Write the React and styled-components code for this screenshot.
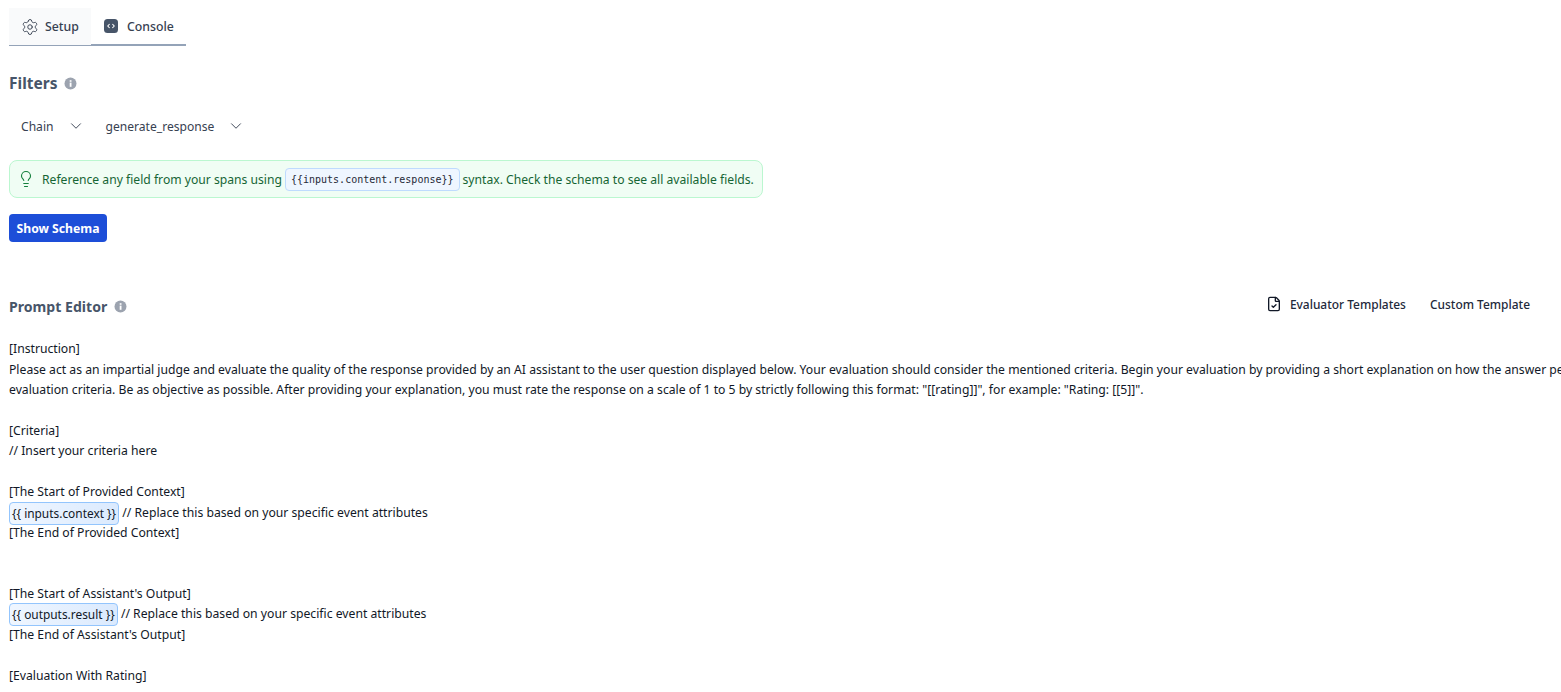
import React from "react";
import styled, { createGlobalStyle } from "styled-components";
import { Settings, ChevronDown, Lightbulb, FileCheck } from "lucide-react";

const GlobalStyle = createGlobalStyle`
  html, body {
    margin: 0;
    padding: 0;
    background: #fff;
    overflow: hidden;
  }
  body {
    font-family: "Noto Sans", "Liberation Sans", sans-serif;
  }
`;

const Page = styled.div`
  width: 1561px;
  height: 692px;
  overflow: hidden;
  padding: 8px 0 0 9px;
  box-sizing: border-box;
`;

const Tabs = styled.div`
  display: flex;
`;

const Tab = styled.div`
  display: flex;
  align-items: center;
  gap: ${(p) => (p.$active ? 6 : 8)}px;
  height: 38px;
  padding: 0 12px;
  box-sizing: border-box;
  font-size: 12.3px;
  font-weight: 500;
  color: #374151;
  background: ${(p) => (p.$active ? "#f9fafb" : "#fff")};
  border-bottom: ${(p) => (p.$active ? "1px solid #94a3b8" : "2px solid #94a3b8")};
`;

const ConsoleIcon = () => (
  <svg width="16" height="16" viewBox="0 0 16 16">
    <rect x="1" y="1" width="14" height="14" rx="3.5" fill="#475569" />
    <path d="M6.6 6 4.8 8l1.8 2M9.4 6l1.8 2-1.8 2" fill="none" stroke="#fff" strokeWidth="1.1" />
  </svg>
);

const InfoIcon = () => (
  <svg width="13" height="13" viewBox="0 0 13 13">
    <circle cx="6.5" cy="6.5" r="6" fill="#9ca3af" />
    <rect x="5.7" y="5.6" width="1.8" height="4.2" fill="#fff" />
    <rect x="5.7" y="3.2" width="1.8" height="1.6" fill="#fff" />
  </svg>
);

const HeadingRow = styled.div`
  display: flex;
  align-items: center;
  gap: 7px;
  margin-top: ${(p) => p.$top}px;
`;

const Heading = styled.h2`
  margin: 0;
  font-size: ${(p) => p.$size}px;
  line-height: 24px;
  font-weight: 700;
  color: #475569;
`;

const FilterRow = styled.div`
  display: flex;
  align-items: center;
  margin-top: 21px;
  padding-left: 1px;
  height: 20px;
`;

const Select = styled.div`
  display: flex;
  align-items: center;
  gap: 13px;
  padding: 0 10px 0 11px;
  font-size: 12.1px;
  color: #374151;
`;

const Notice = styled.div`
  display: flex;
  align-items: center;
  width: 754px;
  height: 38px;
  margin-top: 24px;
  padding: 0 7px;
  box-sizing: border-box;
  background: #f0fdf4;
  border: 1px solid #bbf7d0;
  border-radius: 8px;
  font-size: 12.15px;
  color: #166534;
  white-space: nowrap;
`;

const NoticeIcon = styled(Lightbulb)`
  flex-shrink: 0;
  margin-right: 7px;
  color: #15803d;
`;

const Code = styled.code`
  display: inline-block;
  margin: 0 3px;
  padding: 0 5px;
  height: 23px;
  line-height: 22px;
  box-sizing: border-box;
  background: #eff6ff;
  border: 1px solid #bfdbfe;
  border-radius: 4px;
  font-family: "DejaVu Sans Mono", "Liberation Mono", monospace;
  font-size: 10px;
  color: #1f2937;
`;

const PrimaryButton = styled.button`
  display: block;
  margin-top: 16px;
  width: 98px;
  height: 28px;
  padding: 0;
  border: 0;
  border-radius: 4px;
  background: #1d4ed8;
  color: #fff;
  font-family: inherit;
  font-size: 12.2px;
  font-weight: 700;
`;

const EditorHeader = styled.div`
  display: flex;
  align-items: center;
  justify-content: space-between;
  margin-top: 52px;
  height: 24px;
  padding-right: 31px;
`;

const EditorTitle = styled.div`
  display: flex;
  align-items: center;
  gap: 7px;
  padding-top: 1px;
`;

const TemplateActions = styled.div`
  display: flex;
  align-items: center;
  gap: 24px;
  margin-top: -4px;
`;

const TemplateAction = styled.div`
  display: flex;
  align-items: center;
  gap: 8px;
  font-size: 11.95px;
  font-weight: 500;
  color: #1e293b;
`;

const Editor = styled.div`
  margin-top: 21.4px;
  font-size: 12.2px;
  line-height: 20.4px;
  color: #111827;
  white-space: pre;
`;

const Line = styled.div`
  height: 20.4px;
`;

const Variable = styled.span`
  display: inline-block;
  padding: 0 2px;
  height: 23px;
  margin-top: -1px;
  line-height: 20px;
  font-size: 11.9px;
  box-sizing: border-box;
  background: linear-gradient(90deg, #eff6ff, #dbeafe);
  border: 1px solid #93c5fd;
  border-radius: 4px;
  vertical-align: top;
`;

const promptLines = [
  "[Instruction]",
  'Please act as an impartial judge and evaluate the quality of the response provided by an AI assistant to the user question displayed below. Your evaluation should consider the mentioned criteria. Begin your evaluation by providing a short explanation on how the answer performs relative to the',
  'evaluation criteria. Be as objective as possible. After providing your explanation, you must rate the response on a scale of 1 to 5 by strictly following this format: "[[rating]]", for example: "Rating: [[5]]".',
  "",
  "[Criteria]",
  "// Insert your criteria here",
  "",
  "[The Start of Provided Context]",
  { variable: "{{ inputs.context }}" },
  "[The End of Provided Context]",
  "",
  "",
  "[The Start of Assistant's Output]",
  { variable: "{{ outputs.result }}" },
  "[The End of Assistant's Output]",
  "",
  "[Evaluation With Rating]",
];

const App = () => {
  return (
    <Page>
      <GlobalStyle />
      <Tabs>
        <Tab $active>
          <Settings size={18} strokeWidth={1.25} />
          Setup
        </Tab>
        <Tab>
          <ConsoleIcon />
          Console
        </Tab>
      </Tabs>

      <HeadingRow $top={25}>
        <Heading $size={15.5}>Filters</Heading>
        <InfoIcon />
      </HeadingRow>

      <FilterRow>
        <Select>
          Chain
          <ChevronDown size={18} strokeWidth={1.25} />
        </Select>
        <Select>
          generate_response
          <ChevronDown size={18} strokeWidth={1.25} />
        </Select>
      </FilterRow>

      <Notice>
        <NoticeIcon size={18} strokeWidth={1.5} />
        Reference any field from your spans using
        <Code>{"{{inputs.content.response}}"}</Code>
        syntax. Check the schema to see all available fields.
      </Notice>

      <PrimaryButton>Show Schema</PrimaryButton>

      <EditorHeader>
        <EditorTitle>
          <Heading $size={14.1}>Prompt Editor</Heading>
          <InfoIcon />
        </EditorTitle>
        <TemplateActions>
          <TemplateAction>
            <FileCheck size={16} strokeWidth={2} color="#111827" />
            Evaluator Templates
          </TemplateAction>
          <TemplateAction>Custom Template</TemplateAction>
        </TemplateActions>
      </EditorHeader>

      <Editor>
        {promptLines.map((line, i) =>
          typeof line === "string" ? (
            <Line key={i}>{line}</Line>
          ) : (
            <Line key={i}>
              <Variable>{line.variable}</Variable> // Replace this based on your specific event attributes
            </Line>
          )
        )}
      </Editor>
    </Page>
  );
};

export default App;
